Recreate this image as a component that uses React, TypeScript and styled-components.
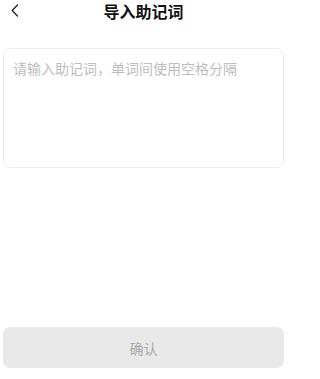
import React from "react";
import styled, { createGlobalStyle } from "styled-components";

const Global = createGlobalStyle`
  html, body { margin: 0; padding: 0; background: #ffffff; }
  * { box-sizing: border-box; }
  body { font-family: "Noto Sans CJK SC", "Noto Sans", sans-serif; }
`;

const Page = styled.div`
  display: flex;
  flex-direction: column;
  width: 298px;
  height: 379px;
  padding: 0 14px 11px 3px;
`;

const Header = styled.div`
  position: relative;
  display: flex;
  align-items: center;
  justify-content: center;
  height: 22px;
`;

const BackButton = styled.button`
  position: absolute;
  left: 4px;
  top: 1px;
  width: 16px;
  height: 18px;
  padding: 0;
  border: none;
  background: transparent;
  display: flex;
  align-items: center;
  justify-content: center;
`;

const Title = styled.h1`
  margin: 0;
  font-size: 16px;
  font-weight: 700;
  color: #111111;
  line-height: 22px;
`;

const MnemonicInput = styled.textarea`
  display: block;
  margin-top: 26px;
  width: 100%;
  height: 120px;
  border: 1px solid #ececec;
  border-radius: 8px;
  padding: 9px 9px;
  resize: none;
  outline: none;
  font-family: "Noto Sans CJK SC", "Noto Sans", sans-serif;
  font-size: 14px;
  line-height: 20px;
  color: #333333;
  &::placeholder { color: #bdbdbd; }
`;

const Footer = styled.div`
  margin-top: auto;
`;

const ConfirmButton = styled.button`
  display: block;
  width: 100%;
  height: 41px;
  border: none;
  border-radius: 7px;
  background: #e9e9e9;
  color: #a8a8a8;
  font-family: "Noto Sans CJK SC", "Noto Sans", sans-serif;
  font-size: 14px;
`;

export default function App() {
  return (
    <>
      <Global />
      <Page>
        <Header>
          <BackButton aria-label="back">
            <svg width="8" height="13" viewBox="0 0 8 13" fill="none">
              <path d="M6.5 1 L1.2 6.5 L6.5 12" stroke="#222" strokeWidth="1.3" strokeLinecap="round" strokeLinejoin="round" />
            </svg>
          </BackButton>
          <Title>导入助记词</Title>
        </Header>
        <MnemonicInput placeholder="请输入助记词，单词间使用空格分隔" />
        <Footer>
          <ConfirmButton disabled>确认</ConfirmButton>
        </Footer>
      </Page>
    </>
  );
}
